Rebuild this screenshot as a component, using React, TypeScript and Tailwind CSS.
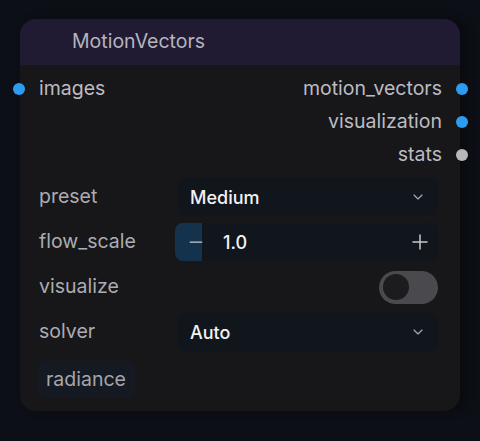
import { ChevronDown, Minus, Plus } from "lucide-react";

function OutputSlot({ label, color }: { label: string; color: string }) {
  return (
    <div className="flex h-[33px] items-center justify-end">
      <span className="text-[19.5px] text-[#bcbcc2]">{label}</span>
      <span className={`-mr-[28px] ml-[14px] h-[12px] w-[12px] rounded-full ${color}`} />
    </div>
  );
}

function SelectWidget({ value }: { value: string }) {
  return (
    <div className="flex h-[38px] w-[260px] items-center justify-between rounded-lg bg-[#11151c] pl-[12px] pr-[12px]">
      <span className="text-[18px] font-medium text-[#f2f2f4]">{value}</span>
      <ChevronDown className="h-[16px] w-[16px] text-[#a9a9ae]" strokeWidth={1.75} />
    </div>
  );
}

function Label({ children }: { children: string }) {
  return <span className="text-[19.5px] text-[#acacb2]">{children}</span>;
}

export default function App() {
  return (
    <div
      className="min-h-screen w-full bg-[#0c0f15] pl-[20px] pt-[19px]"
      style={{ fontFamily: "Inter, 'Noto Sans', sans-serif" }}
    >
      <div className="w-[440px] rounded-[16px] bg-[#17171a] pb-[13px] shadow-[6px_0_10px_rgba(0,0,0,0.35)]">
        <div className="flex h-[46px] items-center rounded-t-[16px] bg-[#211a33] pl-[52px]">
          <span className="text-[19.5px] text-[#b6b4bf]">MotionVectors</span>
        </div>

        <div className="relative pl-[19px] pr-[20px] pt-[7px]">
          <div className="absolute left-[-7px] top-[7px] flex h-[33px] items-center">
            <span className="h-[12px] w-[12px] rounded-full bg-[#2d9bf0]" />
            <span className="ml-[14px] text-[19.5px] text-[#bcbcc2]">images</span>
          </div>
          <OutputSlot label="motion_vectors" color="bg-[#2d9bf0]" />
          <OutputSlot label="visualization" color="bg-[#2d9bf0]" />
          <OutputSlot label="stats" color="bg-[#b8b8b8]" />
        </div>

        <div className="mt-[7px] flex flex-col gap-[7px] pl-[19px] pr-[22px]">
          <div className="flex items-center justify-between">
            <Label>preset</Label>
            <SelectWidget value="Medium" />
          </div>

          <div className="flex items-center justify-between">
            <Label>flow_scale</Label>
            <div className="relative flex h-[38px] w-[260px] items-center rounded-lg bg-[#11151c]">
              <div className="absolute left-[-3px] top-0 h-full w-[27px] rounded-l-lg bg-[#15324d]" />
              <Minus className="relative ml-[8px] h-[20px] w-[20px] text-[#c9c9ce]" strokeWidth={1.5} />
              <span className="relative ml-[17px] text-[18px] font-medium text-[#f2f2f4]">1.0</span>
              <Plus className="ml-auto mr-[6px] h-[24px] w-[24px] text-[#c9c9ce]" strokeWidth={1.5} />
            </div>
          </div>

          <div className="flex h-[38px] items-center justify-between">
            <Label>visualize</Label>
            <div className="flex h-[33px] w-[59px] items-center rounded-full bg-[#4a4a4e] pl-[4px]">
              <span className="h-[26px] w-[26px] rounded-full bg-[#1c1c1f]" />
            </div>
          </div>

          <div className="flex items-center justify-between">
            <Label>solver</Label>
            <SelectWidget value="Auto" />
          </div>
        </div>

        <div className="mt-[10px] pl-[17px]">
          <div className="inline-flex h-[37px] w-[98px] items-center rounded-lg bg-[#151a22] pl-[9px]">
            <span className="text-[19.5px] text-[#a5a5aa]">radiance</span>
          </div>
        </div>
      </div>
    </div>
  );
}
